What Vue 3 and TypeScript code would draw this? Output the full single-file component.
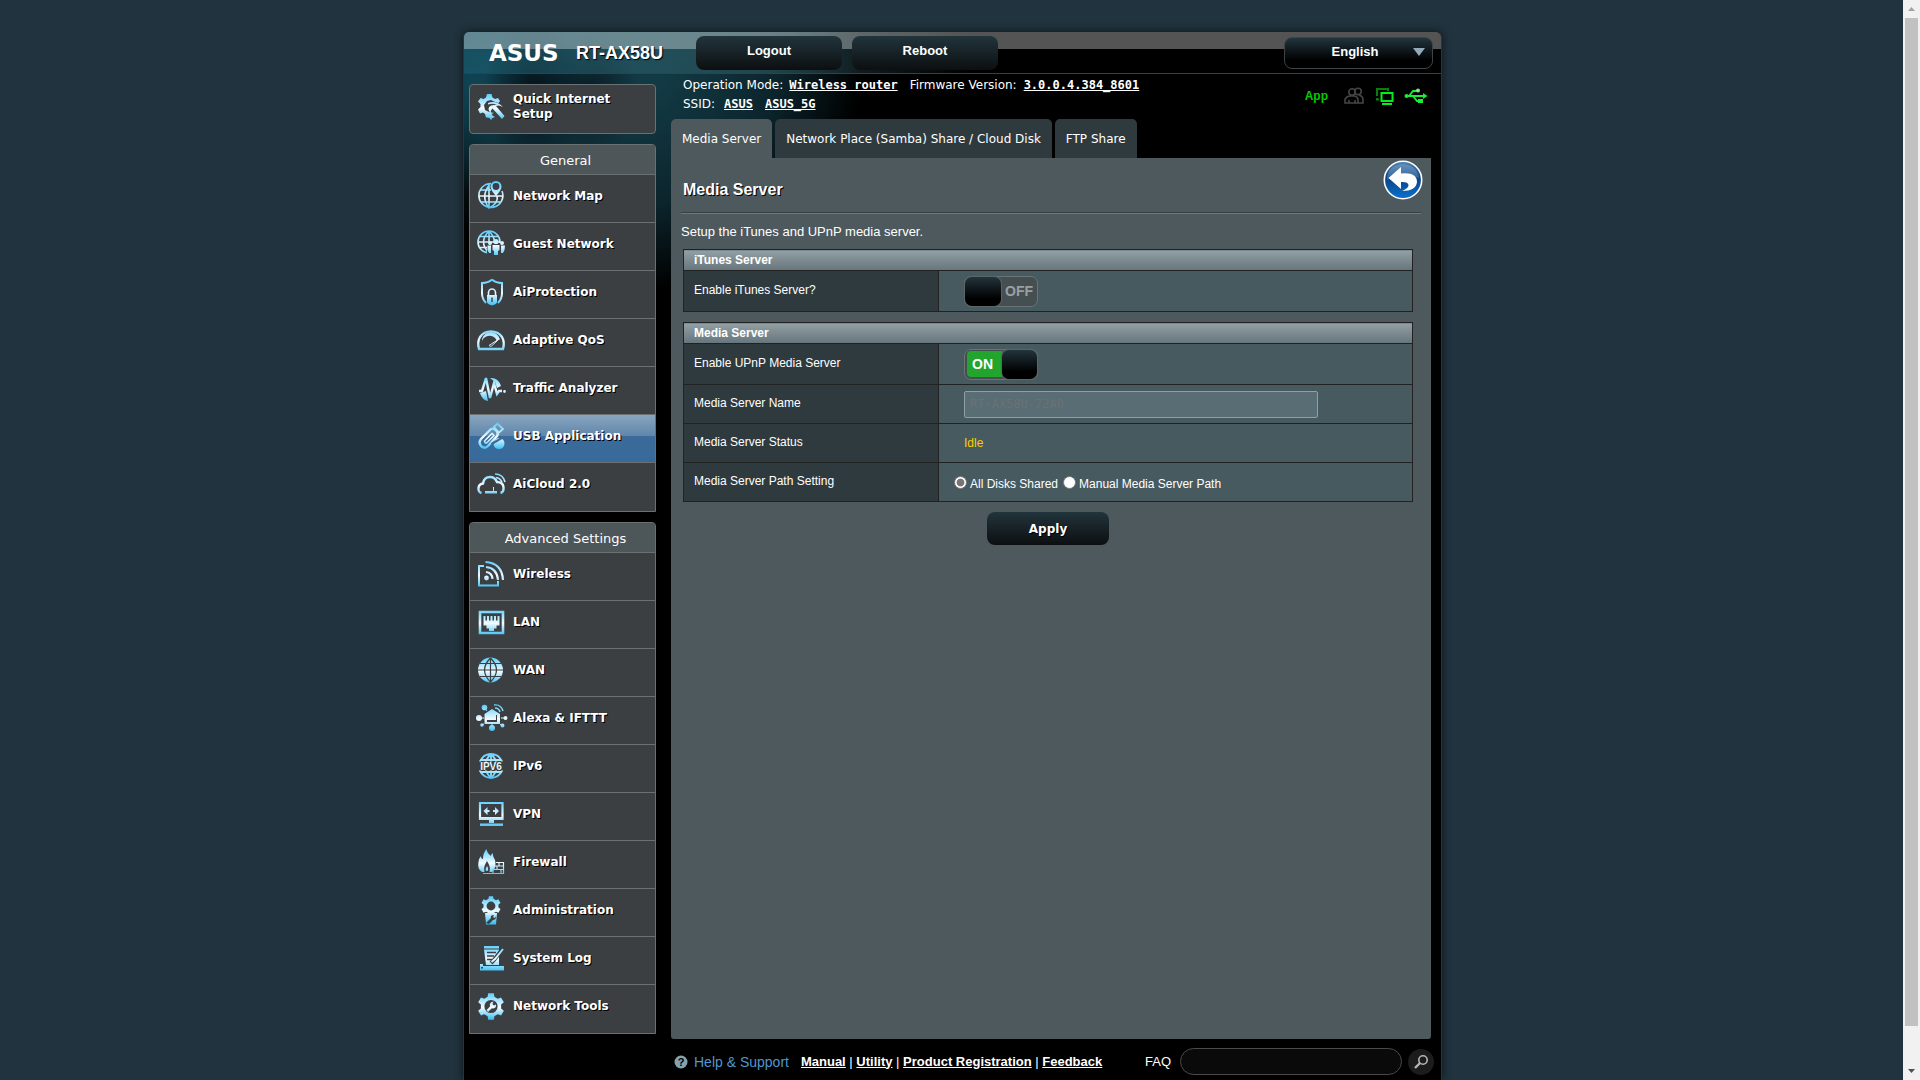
<script setup lang="ts">
import { ref } from 'vue'

interface Shape { d: string; w?: number; dark?: boolean }
interface MenuItem { label: string; icon: Shape[]; text?: string; active?: boolean }

const circle = (cx: number, cy: number, r: number): string =>
  `M${cx - r} ${cy}a${r} ${r} 0 1 0 ${2 * r} 0a${r} ${r} 0 1 0 ${-2 * r} 0Z`

const gear = (cx: number, cy: number, outer: number, inner: number, teeth: number): string => {
  const pts: string[] = []
  const step = (Math.PI * 2) / teeth
  for (let i = 0; i < teeth; i++) {
    const a = i * step - Math.PI / 2
    const spots: [number, number][] = [[-0.32, inner], [-0.2, outer], [0.2, outer], [0.32, inner]]
    for (const [k, r] of spots) {
      pts.push(`${(cx + Math.cos(a + k * step) * r).toFixed(2)} ${(cy + Math.sin(a + k * step) * r).toFixed(2)}`)
    }
  }
  return `M${pts.join('L')}Z`
}

const globe = (cx: number, cy: number, r: number): string =>
  circle(cx, cy, r) +
  `M${cx} ${cy - r}V${cy + r}M${cx - r} ${cy}H${cx + r}` +
  `M${cx} ${cy - r}Q${cx - r} ${cy} ${cx} ${cy + r}Q${cx + r} ${cy} ${cx} ${cy - r}` +
  `M${cx - r * 0.85} ${cy - r * 0.5}H${cx + r * 0.85}M${cx - r * 0.85} ${cy + r * 0.5}H${cx + r * 0.85}`

const wizardIcon: Shape[] = [
  { d: 'M17 21L14 22L13.500 25.500H9L8 22L6 20.500L3 21.500L1 17.500L3.500 15V12L1 9.500L3.500 6L6.500 7L9 5.500L10 2H14.500L15.500 5.500L18 7L21 6L23 9L21.500 11L17 9.500L14 8L10 9L7 13L8 18L12 20Z' },
  { d: 'M11 11Q19 8 26 15Q22 12.500 19 14L27.500 24L25 27L15.500 16.500Q13 19 14 22Q9 16 14 13.500L20 12.500Q15 11 11 12.500Z' },
  { d: 'M14 21L15.500 23.500L18 25L15.500 26L14 28L12.500 26L10 25L12.500 23.500Z' },
]

const general: MenuItem[] = [
  {
    label: 'Network Map',
    icon: [
      { d: 'M14 2.500A12 12 0 1 0 25 10M12 3V27M2 15H26M13 3Q3 15 12 27Q22 22 20 15M3 9H14M4 21H24', w: 1.6 },
      { d: 'M19 15Q13.500 9 13.500 5.500A5.500 5.500 0 0 1 24.500 5.500Q24.500 9 19 15Z' },
      { d: circle(19, 5.5, 3.4), dark: true },
    ],
  },
  {
    label: 'Guest Network',
    icon: [
      { d: globe(12, 13, 11), w: 1.6 },
      { d: 'M10 14H28V27H10Z', dark: true },
      { d: circle(19, 12.5, 2.6) + circle(13, 14, 2) + circle(25, 14, 2) },
      { d: 'M15.500 16H22.500V21L21 22V26H17V22L15.500 21ZM10.500 16.500H14V24H12L10.500 21ZM24 16.500H28L27.500 21L26 24H24Z' },
    ],
  },
  {
    label: 'AiProtection',
    icon: [
      { d: 'M15 2.500Q19 6 25 6V16Q25 22 21 26M15 2.500Q11 6 5 6V16Q5 22 9 26', w: 2 },
      { d: 'M11.500 18V15.500A3.500 3.500 0 0 1 18.500 15.500V18', w: 1.6 },
      { d: 'M10 18H20V25Q20 27 15 28.500Q10 27 10 25Z' },
      { d: 'M14.300 20.500H15.700V25H14.300Z', dark: true },
    ],
  },
  {
    label: 'Adaptive QoS',
    icon: [
      { d: 'M2 24Q0 17 3 12A13 12 0 0 1 25 12Q28 17 26 24Z', w: 2.4 },
      { d: 'M5 18A9 9 0 0 1 23 14.500L19.500 15A7.500 6.500 0 0 0 5 18Z' },
      { d: 'M12 20.500L22 14L14 21.500Z', w: 1 },
    ],
  },
  {
    label: 'Traffic Analyzer',
    icon: [
      { d: 'M2 18H5L9 5L13 25L17 10L20 21L22 18H25', w: 2.4 },
      { d: 'M13 5Q21 4 24 13L20 15L18 9Z' },
      { d: 'M3 20L9 18L11 28Q5 27 3 20Z' },
      { d: circle(27.5, 18.5, 1.4) },
    ],
  },
  {
    label: 'USB Application',
    active: true,
    icon: [
      { d: 'M4 18L14 8Q16 7 18 8.500L20 10.500Q21.500 13 20 15L11 25Q8 28 4.500 25.500Q1 22 4 18Z', w: 2.4 },
      { d: 'M7.500 20L15 12.500L17 14.500L9.500 22Q8 22.500 7.500 20Z', w: 1.6 },
      { d: 'M17 6L20.500 2.500L26 8L22 11.500Z', w: 1.8 },
      { d: circle(22, 22.5, 5.5) },
      { d: 'M14 22L26 15L27 17L15 24Z', dark: true },
    ],
  },
  {
    label: 'AiCloud 2.0',
    icon: [
      { d: 'M4.500 24Q1 23 1.500 19Q2 15 6 14.500Q7 8 13 8Q18 8 20 13Q26 13 26.500 18Q27 23 23.500 24', w: 2.4 },
      { d: 'M8 22H20V24.500H8Z' },
      { d: 'M16.500 18V22', w: 1 },
      { d: 'M18 5Q26 5 28 13M19 8.500Q23 9 25 13', w: 1.6 },
    ],
  },
]

const advanced: MenuItem[] = [
  {
    label: 'Wireless',
    icon: [
      { d: 'M7 7H2V26.500H21V22', w: 2 },
      { d: circle(9.5, 19, 2.4) },
      { d: 'M9 13Q15 13.500 15.500 20M9 8Q20 9 21 21M8.500 3Q25 4 26 21', w: 2.2 },
    ],
  },
  {
    label: 'LAN',
    icon: [
      { d: 'M3 5H26V26H3Z', w: 2.6 },
      { d: 'M6.500 9H8.500V13.500H10V9H12V13.500H13.500V9H15.500V13.500H17V9H19V13.500H20.500V9H22.500V18.500H19.500V21.500H17V24H12V21.500H9.500V18.500H6.500Z' },
    ],
  },
  {
    label: 'WAN',
    icon: [
      { d: circle(13.5, 15, 12.5) },
      { d: 'M13.500 3V27M1 15H26M13.500 3Q1.500 15 13.500 27Q25.500 15 13.500 3M3 8.500H24M3 21.500H24', w: 1.2, dark: true },
    ],
  },
  {
    label: 'Alexa & IFTTT',
    icon: [
      { d: 'M7.500 11L15 6L23 11V21H7.500Z' },
      { d: 'M2 15H7M24 15H29M15 21V25M7 21L4 23M23 21L26 24M7 4L10 8', w: 1 },
      { d: circle(2, 15, 3) + circle(28.5, 15, 2) + circle(7.5, 4.5, 2.8) + circle(15, 25, 3) + circle(5, 22, 1.8) + circle(25.5, 22.5, 2) },
      { d: 'M17 2Q24 1 26 8M18 5Q22 5 23 9', w: 1.4 },
      { d: 'M10 17H20V19H10ZM19 12H20V17H19Z', dark: true },
    ],
  },
  {
    label: 'IPv6',
    text: 'IPV6',
    icon: [
      { d: globe(14, 15, 12), w: 1.8 },
      { d: 'M1 10.500H27V19.500H1Z', dark: true },
    ],
  },
  {
    label: 'VPN',
    icon: [
      { d: 'M3 4H25.500V20H3Z', w: 2.2 },
      { d: 'M4 18H25V21H4ZM12 21H17V24H12ZM3 24.500H26V27H3Z' },
      { d: 'M6.500 12L10.500 8V11H12.500V13H10.500V16ZM22 12L18 8V11H16V13H18V16Z' },
    ],
  },
  {
    label: 'Firewall',
    icon: [
      { d: 'M9.500 2Q10 6 14 9Q14 7 15.500 6Q16 10 18 13Q20 20 15 25H5Q0 22 1.500 15Q2 11 4 9Q4 12 6 12Q6 6 9.500 2Z' },
      { d: 'M10 14Q14 20 12.500 25H7.500Q6 20 10 14Z', dark: true },
      { d: 'M10 19Q12 22 10.500 24H9Q8 22 10 19Z' },
      { d: 'M19 15.500H26.500V26.500H6M18 19H26M17 22.500H26M22 15.500V19M20 19V22.500M24 22.500V26.500M16 23V26.500', w: 1.2 },
    ],
  },
  {
    label: 'Administration',
    icon: [
      { d: gear(14, 11, 10, 7.6, 6) },
      { d: circle(14, 11, 4.4), dark: true },
      { d: 'M8 18H20L19 29.500H9Z' },
      { d: 'M9 28L14 23Q13 20 17 20L16 22L17.500 23L19 21.500Q19 25 16 25L12 29Z', dark: true },
    ],
  },
  {
    label: 'System Log',
    icon: [
      { d: 'M7 3H22V5.500H7ZM7 6.500H22V22H9Z' },
      { d: 'M10 9.500H19M10 13H17M10 16.500H15', w: 1.4, dark: true },
      { d: 'M25.500 6L17 17L14 20', w: 4, dark: true },
      { d: 'M26 6L18 16L14.500 19', w: 2 },
      { d: 'M3 21H6V23H27V27.500H3Z' },
      { d: circle(5, 24.8, 1), dark: true },
    ],
  },
  {
    label: 'Network Tools',
    icon: [
      { d: gear(14, 15.5, 13.5, 10.3, 6) },
      { d: circle(14, 15.5, 6.6), dark: true },
      { d: 'M9.500 19L13 15.500Q12 11 16.500 10.500L15.500 13L17 14.500L19 13.500Q19.500 18 14.500 17.500L11 21Z' },
    ],
  },
]

const menus = [
  { title: 'General', items: general },
  { title: 'Advanced Settings', items: advanced },
]

const tabs = ['Media Server', 'Network Place (Samba) Share / Cloud Disk', 'FTP Share']
const activeTab = ref('Media Server')
const itunes = ref(false)
const upnp = ref(true)
const serverName = ref('RT-AX58U-72A0')
const path = ref('all')
const faq = ref('')
</script>

<template>
  <div class="page">
    <svg class="defs" aria-hidden="true">
      <defs>
        <linearGradient id="ice" gradientUnits="userSpaceOnUse" x1="0" y1="2" x2="0" y2="28">
          <stop offset="0" stop-color="#5ccdfc" />
          <stop offset="0.55" stop-color="#f4fbff" />
          <stop offset="1" stop-color="#3fc0f5" />
        </linearGradient>
        <linearGradient id="orb" x1="0" y1="0" x2="0" y2="1">
          <stop offset="0" stop-color="#4f86b5" />
          <stop offset="0.45" stop-color="#0b4285" />
          <stop offset="1" stop-color="#0a72d0" />
        </linearGradient>
      </defs>
    </svg>

    <div class="stage">
      <div class="shell">
        <header class="top">
          <svg class="logo" width="74" height="30" viewBox="0 0 74 30" role="img" aria-label="ASUS">
            <text x="2" y="23">ASUS</text>
          </svg>
          <span class="model">RT-AX58U</span>
          <button type="button" class="pill">Logout</button>
          <button type="button" class="pill">Reboot</button>
          <button type="button" class="lang">
            <span>English</span>
            <svg width="12" height="8" viewBox="0 0 12 8"><path d="M0 0H12L6 8Z" fill="#93aabb" /></svg>
          </button>
        </header>

        <div class="body">
          <nav class="side">
            <a href="#" class="qis">
              <svg class="icon" width="28" height="28" viewBox="0 0 28 28">
                <path v-for="(s, i) in wizardIcon" :key="i" :d="s.d" :class="s.w ? 'line' : 'solid'" :stroke-width="s.w" />
              </svg>
              <span>Quick Internet Setup</span>
            </a>
            <section v-for="menu in menus" :key="menu.title" class="menu">
              <h2>{{ menu.title }}</h2>
              <a v-for="item in menu.items" :key="item.label" href="#" class="item" :class="{ active: item.active }">
                <svg class="icon" width="28" height="28" viewBox="0 0 28 28">
                  <path
                    v-for="(s, i) in item.icon"
                    :key="i"
                    :d="s.d"
                    :class="[s.w ? 'line' : 'solid', { dark: s.dark }]"
                    :stroke-width="s.w"
                  />
                  <text v-if="item.text" x="14" y="19" class="badge">{{ item.text }}</text>
                </svg>
                <span>{{ item.label }}</span>
              </a>
            </section>
          </nav>

          <div class="main">
            <div class="status">
              <div class="info">
                <p>
                  <span>Operation Mode:</span><a href="#" class="mode">Wireless router</a>
                  <span>Firmware Version:</span><a href="#">3.0.0.4.384_8601</a>
                </p>
                <p><span>SSID:</span><a href="#" class="ssid">ASUS</a><a href="#">ASUS_5G</a></p>
              </div>
              <div class="lights">
                <a href="#" class="app">App</a>
                <svg width="20" height="18" viewBox="0 0 20 18" fill="none" stroke="#454545" stroke-width="1.6">
                  <circle cx="8" cy="5" r="3.2" /><circle cx="14" cy="4.500" r="3.200" />
                  <path d="M1 16V12Q3 9 6 9H10Q13 9 14 12V16ZM14 16H19V12Q18 8 15 8.500M5 13V16M11 13V16" />
                </svg>
                <svg width="20" height="18" viewBox="0 0 20 18" fill="none">
                  <path d="M13 4V2H2V9M2 11V12.500H4" stroke="#0a7d0a" stroke-width="2" />
                  <rect x="6.500" y="6" width="11" height="8" stroke="#00f01a" stroke-width="2" />
                  <path d="M7 17H17" stroke="#00f01a" stroke-width="2" />
                </svg>
                <svg width="24" height="18" viewBox="0 0 24 18" fill="none" stroke="#19ee2c" stroke-width="1.8">
                  <path d="M2 9H20M5 9L9 4H13M9 9L13 14H16" />
                  <path d="M19 6L23.500 9L19 12Z" fill="#19ee2c" stroke="none" />
                  <circle cx="2.500" cy="9" r="2" fill="#19ee2c" stroke="none" />
                  <circle cx="14" cy="3.500" r="2" fill="#7be987" stroke="none" />
                  <rect x="14" y="12" width="5" height="4" fill="#19ee2c" stroke="none" />
                </svg>
              </div>
            </div>

            <div class="tabs" role="tablist">
              <button
                v-for="tab in tabs"
                :key="tab"
                type="button"
                role="tab"
                class="tab"
                :class="{ on: tab === activeTab }"
                :aria-selected="tab === activeTab"
                @click="activeTab = tab"
              >
                {{ tab }}
              </button>
            </div>

            <main class="panel">
              <div class="title">
                <h1>Media Server</h1>
                <button type="button" class="back" aria-label="Back">
                  <svg width="40" height="40" viewBox="0 0 40 40">
                    <circle cx="20" cy="20" r="18.700" fill="url(#orb)" stroke="#fff" stroke-width="1.600" />
                    <path d="M4 20Q4 5 20 4Q34 5 36 18Q20 12 4 20Z" fill="#fff" fill-opacity="0.18" />
                    <path d="M5.500 18L18 7V13.500Q34 12 34 22Q33 31 19 31Q26 28 25.500 25Q25 21.500 18 22V29Z" fill="#fff" />
                  </svg>
                </button>
              </div>
              <p class="intro">Setup the iTunes and UPnP media server.</p>

              <table>
                <colgroup><col class="names" /><col /></colgroup>
                <thead>
                  <tr><th colspan="2">iTunes Server</th></tr>
                </thead>
                <tbody>
                  <tr class="tall">
                    <th><label for="itunes">Enable iTunes Server?</label></th>
                    <td>
                      <label class="switch" :class="{ on: itunes }">
                        <input id="itunes" v-model="itunes" type="checkbox" role="switch" />
                        <span class="word">{{ itunes ? 'ON' : 'OFF' }}</span><span class="knob"></span>
                      </label>
                    </td>
                  </tr>
                </tbody>
              </table>

              <table>
                <colgroup><col class="names" /><col /></colgroup>
                <thead>
                  <tr><th colspan="2">Media Server</th></tr>
                </thead>
                <tbody>
                  <tr class="tall">
                    <th><label for="upnp">Enable UPnP Media Server</label></th>
                    <td>
                      <label class="switch" :class="{ on: upnp }">
                        <input id="upnp" v-model="upnp" type="checkbox" role="switch" />
                        <span class="word">{{ upnp ? 'ON' : 'OFF' }}</span><span class="knob"></span>
                      </label>
                    </td>
                  </tr>
                  <tr>
                    <th><label for="name">Media Server Name</label></th>
                    <td><input id="name" v-model="serverName" type="text" class="field" disabled /></td>
                  </tr>
                  <tr>
                    <th>Media Server Status</th>
                    <td><span class="idle">Idle</span></td>
                  </tr>
                  <tr>
                    <th>Media Server Path Setting</th>
                    <td class="choices">
                      <label><input v-model="path" type="radio" name="path" value="all" />All Disks Shared</label>
                      <label><input v-model="path" type="radio" name="path" value="manual" />Manual Media Server Path</label>
                    </td>
                  </tr>
                </tbody>
              </table>

              <button type="button" class="apply">Apply</button>
            </main>
          </div>
        </div>

        <footer class="foot">
          <svg width="14" height="14" viewBox="0 0 14 14">
            <circle cx="7" cy="7" r="6.500" fill="#85a3ae" />
            <text x="7" y="11" text-anchor="middle" class="mark">?</text>
          </svg>
          <span class="help">Help &amp; Support</span>
          <span class="links">
            <a href="#">Manual</a> | <a href="#">Utility</a> | <a href="#">Product Registration</a> | <a href="#">Feedback</a>
          </span>
          <label for="faq">FAQ</label>
          <input id="faq" v-model="faq" type="text" />
          <button type="button" class="find" aria-label="Search">
            <svg width="16" height="16" viewBox="0 0 16 16" fill="none" stroke="#b5b5b5">
              <circle cx="10" cy="6" r="4.200" stroke-width="1.600" /><path d="M7 9L2 14" stroke-width="2.400" />
            </svg>
          </button>
        </footer>
      </div>
    </div>

    <div class="scroll" aria-hidden="true">
      <svg width="7" height="4" viewBox="0 0 7 4"><path d="M0 4L3.500 0L7 4Z" fill="#a3a3a3" /></svg>
      <div class="thumb"></div>
      <svg width="7" height="4" viewBox="0 0 7 4"><path d="M0 0L3.500 4L7 0Z" fill="#505050" /></svg>
    </div>
  </div>
</template>

<style>
body {
  margin: 0;
  background: #21333e;
}
</style>

<style scoped>
.page {
  display: flex;
  min-height: 100vh;
  background: #21333e;
  color: #fff;
  font: 12px/16px "DejaVu Sans", Verdana, sans-serif;
}
.page *, .page *::before {
  box-sizing: border-box;
}
.defs {
  position: absolute;
  width: 0;
  height: 0;
}
button, input {
  font: inherit;
  color: inherit;
}
button {
  padding: 0;
  border: 0;
  cursor: pointer;
}
a {
  color: inherit;
}
h1, h2, p {
  margin: 0;
}
.stage {
  flex: 1;
  min-width: 0;
  display: flex;
  justify-content: center;
  padding: 32px 0 0 2px;
}
.shell {
  width: 100%;
  max-width: 979px;
  display: flex;
  flex-direction: column;
  border: solid #2c3438;
  border-width: 0 1px;
  border-radius: 5px 5px 0 0;
  box-shadow: 0 0 8px #0b1519;
  background:
    radial-gradient(ellipse 50px 80px at 70px 60px, rgba(2, 8, 14, 0.8), transparent),
    radial-gradient(ellipse 50px 60px at 125px 60px, rgba(2, 8, 14, 0.6), transparent),
    radial-gradient(ellipse 120px 110px at 10px 50px, #0f4454, transparent),
    radial-gradient(ellipse 240px 240px at 160px 20px, #123a45 20%, #0c242c 65%, transparent),
    #000;
}
.top {
  display: flex;
  align-items: center;
  height: 42px;
  padding: 0 8px 0 23px;
  border-bottom: 1px solid #33414f;
  border-radius: 5px 5px 0 0;
  background:
    linear-gradient(rgba(255, 255, 255, 0.33) 17px, transparent 17px),
    linear-gradient(90deg, rgba(30, 100, 120, 0.5), rgba(50, 90, 98, 0.6) 30%, transparent 52%);
}
.logo text {
  font: bold 23px "DejaVu Sans", sans-serif;
  fill: #fff;
}
.model {
  width: 120px;
  margin-left: 15px;
  font: bold 18px/20px "Liberation Sans", Arial, sans-serif;
  text-shadow: 1px 1px 1px #000;
}
.pill {
  width: 146px;
  height: 34px;
  margin-right: 10px;
  padding-bottom: 3px;
  border-radius: 8px;
  background: linear-gradient(#22343c, #0c0f10);
  font: bold 13px/16px "Liberation Sans", Arial, sans-serif;
}
.lang {
  display: flex;
  align-items: center;
  width: 149px;
  height: 32px;
  margin-left: auto;
  padding: 0 7px 2px 26px;
  border: 1px solid #3d4447;
  border-radius: 8px;
  background: linear-gradient(#22343c, #000 75%);
  font: bold 13px/16px "Liberation Sans", Arial, sans-serif;
}
.lang span {
  flex: 1;
  text-align: center;
  padding-right: 14px;
}
.body {
  flex: 1;
  display: flex;
  gap: 15px;
  padding: 0 10px 0 5px;
}
.side {
  flex: 0 0 187px;
  display: flex;
  flex-direction: column;
  gap: 10px;
  padding-top: 10px;
}
.qis {
  display: flex;
  gap: 8px;
  height: 50px;
  padding: 7px 30px 0 7px;
  border: 1px solid #6b7071;
  border-radius: 4px;
  background: #3b3f41;
}
.qis, .item {
  font-weight: bold;
  line-height: 15px;
  text-decoration: none;
  text-shadow: 1px 1px 0 #000;
}
.menu {
  border: 1px solid #6b7071;
  border-radius: 4px 4px 0 0;
  background: #3b3f41;
}
.menu h2 {
  height: 30px;
  border-bottom: 1px solid #6b7071;
  border-radius: 4px 4px 0 0;
  background: #4d5659;
  font-size: 13px;
  font-weight: normal;
  line-height: 31px;
  text-align: center;
  padding-left: 6px;
}
.item {
  display: flex;
  align-items: center;
  gap: 8px;
  height: 48px;
  padding: 0 7px 8px;
  border-bottom: 1px solid #6b7071;
}
.item span {
  padding-top: 3px;
}
.item:last-child {
  border-bottom-color: transparent;
}
.item.active {
  background: linear-gradient(#8aa5bf, #5f86ab 45%, #3a6b9a 45%, #376a9b);
}
.icon {
  flex: none;
  overflow: visible;
}
.solid {
  fill: url(#ice);
}
.solid.dark {
  fill: #3b3f41;
}
.line {
  fill: none;
  stroke: url(#ice);
}
.line.dark {
  stroke: #3b3f41;
}
.active .solid.dark {
  fill: #3a6b9a;
}
.badge {
  font: bold 10px "Liberation Sans", Arial, sans-serif;
  text-anchor: middle;
  fill: #e6f5fc;
  text-shadow: none;
}
.main {
  flex: 1;
  min-width: 0;
  display: flex;
  flex-direction: column;
}
.status {
  display: flex;
  justify-content: space-between;
  height: 45px;
  padding: 2px 3px 0 12px;
}
.info p {
  display: flex;
  height: 19px;
  line-height: 19px;
}
.info a {
  margin-left: 7px;
  font: bold 12px/19px "DejaVu Sans Mono", monospace;
}
.info .mode {
  margin-left: 6px;
  margin-right: 12px;
}
.info .ssid {
  margin-left: 9px;
  margin-right: 5px;
}
.lights {
  display: flex;
  align-items: center;
  height: 40px;
}
.lights svg {
  margin-left: 11px;
}
.app {
  margin-right: 5px;
  color: #0c0;
  font: bold 12px/16px "Liberation Sans", Arial, sans-serif;
  text-decoration: none;
}
.lights svg:last-child {
  margin-left: 9px;
}
.tabs {
  display: flex;
  gap: 3px;
}
.tab {
  height: 39px;
  padding: 0 11px;
  border-radius: 5px 5px 0 0;
  background: #2f3a3e;
}
.tab.on {
  background: #4d595d;
}
.panel {
  flex: 1;
  display: flex;
  flex-direction: column;
  gap: 10px;
  padding: 0 18px 0 12px;
  border-radius: 0 0 3px 3px;
  background: #4d595d;
  font-family: "Liberation Sans", Arial, sans-serif;
}
.title {
  display: flex;
  justify-content: space-between;
  align-items: flex-start;
  height: 56px;
  margin: 0 -8px 0 -2px;
  padding: 2px 0 0 2px;
  border-bottom: 1px solid #6c7a80;
  box-shadow: inset 0 -1px 0 #363f43;
}
h1 {
  padding-top: 20px;
  font-size: 16px;
  line-height: 20px;
  text-shadow: 1px 1px 0 #000;
}
.back {
  margin-right: -2px;
  height: 40px;
  background: none;
}
.back svg {
  display: block;
}
.intro {
  height: 15px;
  margin-left: -2px;
  font-size: 13px;
}
table {
  width: 100%;
  border-collapse: collapse;
  table-layout: fixed;
  font-size: 12px;
  line-height: 16px;
}
.names {
  width: 255px;
}
th, td {
  border: 1px solid #222;
  padding: 0;
  text-align: left;
}
thead th {
  height: 21px;
  padding: 0 10px;
  background: linear-gradient(#92a0a5, #66757c);
}
tbody th {
  padding: 0 10px 3px;
  background: #2f3a3e;
  font-weight: normal;
}
tbody tr {
  height: 39px;
}
tbody tr.tall {
  height: 41px;
}
td {
  padding-left: 25px;
  background: #475a5f;
}
.switch {
  position: relative;
  display: flex;
  width: 74px;
  height: 31px;
  border: 1px solid #6a7375;
  border-radius: 7px;
  background: #454f51;
  flex-direction: row-reverse;
  align-items: center;
}
.switch input {
  position: absolute;
  inset: 0;
  margin: 0;
  opacity: 0;
}
.switch.on {
  flex-direction: row;
}
.word {
  width: 36px;
  margin-right: 0;
  color: #9a9fa1;
  font-size: 14px;
  font-weight: bold;
  line-height: 26px;
  text-align: center;
}
.switch.on .word {
  margin-left: 2px;
  height: 26px;
  border-radius: 4px 0 0 4px;
  background: #22a52c;
  color: #fff;
  padding-right: 4px;
}
.knob {
  width: 36px;
  height: 29px;
  border-radius: 7px;
  background: linear-gradient(#22343c, #000 75%);
  box-shadow: 0 0 1px 1px #596467;
}
.field {
  display: block;
  width: 354px;
  height: 27px;
  padding: 0 5px;
  border: 1px solid #929ea1;
  border-radius: 2px;
  background: #596d74;
  color: #6c7173;
  font: 12px/16px "DejaVu Sans Mono", monospace;
}
.idle {
  color: #fc0;
}
.choices {
  padding: 4px 0 0 15px;
}
.choices label {
  display: inline-flex;
  align-items: center;
  gap: 3px;
  margin-right: 5px;
}
.choices input {
  appearance: none;
  width: 13px;
  height: 13px;
  margin: 0 0 3px;
  border: 1px solid #767676;
  border-radius: 50%;
  background: #fff;
}
.choices input:checked {
  background: radial-gradient(#767676 45%, #fff 55%);
}
.apply {
  align-self: center;
  width: 122px;
  height: 33px;
  border-radius: 8px;
  background: linear-gradient(#22343c, #0c0f10);
  font: bold 12px/16px "DejaVu Sans", Verdana, sans-serif;
  text-shadow: 1px 1px 0 #000;
}
.foot {
  display: flex;
  align-items: center;
  height: 41px;
  padding: 4px 7px 0 210px;
  font: 13px/16px "Liberation Sans", Arial, sans-serif;
}
.mark {
  font: bold 11px "Liberation Sans", Arial, sans-serif;
  fill: #000;
}
.help {
  margin-left: 6px;
  color: #5296cf;
  font-size: 14px;
}
.links {
  flex: 1;
  margin-left: 12px;
}
.links a {
  font-weight: bold;
}
.foot label {
  margin-right: 9px;
}
.foot input {
  width: 222px;
  height: 27px;
  padding: 0 12px;
  border: 1px solid #4a4a4a;
  border-radius: 14px;
  background: #0a0a0a;
}
.find {
  display: grid;
  place-items: center;
  width: 26px;
  height: 26px;
  margin-left: 6px;
  border-radius: 50%;
  background: #1c1c1c;
}
.scroll {
  display: flex;
  flex-direction: column;
  align-items: center;
  gap: 7px;
  width: 17px;
  padding: 7px 0;
  background: #f1f1f1;
}
.thumb {
  width: 13px;
  flex: 0 1 1008px;
  margin-bottom: auto;
  background: #c1c1c1;
}
</style>
